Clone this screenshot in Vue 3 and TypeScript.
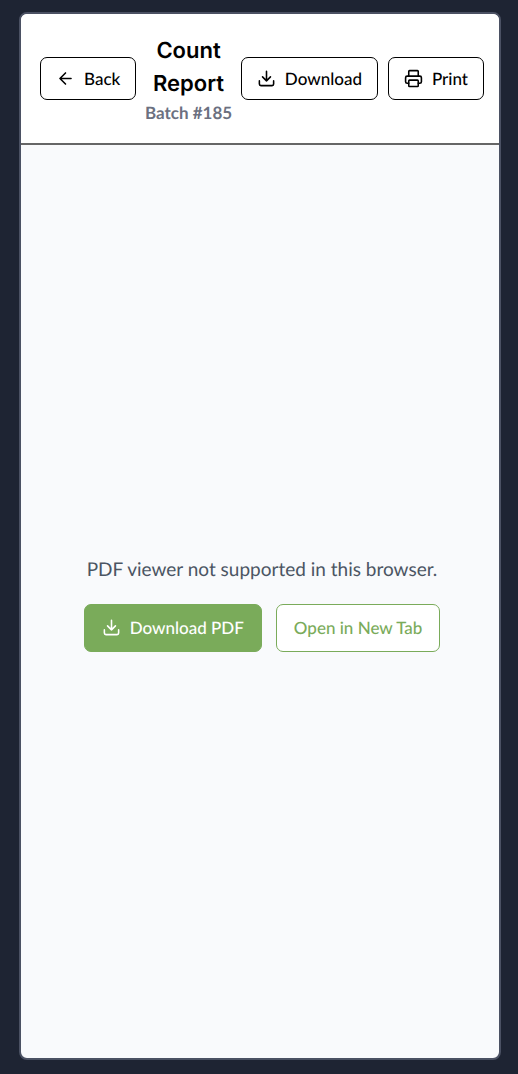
<script setup lang="ts">
const batchNumber: number = 185

function printReport(): void {
  window.print()
}
</script>

<template>
  <div class="backdrop">
    <main class="dialog">
      <header class="toolbar">
        <button type="button" class="btn">
          <svg class="icon" viewBox="0 0 24 24" aria-hidden="true">
            <path d="M19 12H5M12 19l-7-7 7-7" />
          </svg>
          Back
        </button>
        <div class="heading">
          <h1>Count Report</h1>
          <p>Batch #{{ batchNumber }}</p>
        </div>
        <button type="button" class="btn">
          <svg class="icon" viewBox="0 0 24 24" aria-hidden="true">
            <path d="M21 15v4a2 2 0 0 1-2 2H5a2 2 0 0 1-2-2v-4M7 10l5 5 5-5M12 15V3" />
          </svg>
          Download
        </button>
        <button type="button" class="btn" @click="printReport">
          <svg class="icon" viewBox="0 0 24 24" aria-hidden="true">
            <path d="M6 18H4a2 2 0 0 1-2-2v-5a2 2 0 0 1 2-2h16a2 2 0 0 1 2 2v5a2 2 0 0 1-2 2h-2" />
            <path d="M6 9V3a1 1 0 0 1 1-1h10a1 1 0 0 1 1 1v6" />
            <rect x="6" y="14" width="12" height="8" rx="1" />
          </svg>
          Print
        </button>
      </header>
      <section class="viewer">
        <p class="message">PDF viewer not supported in this browser.</p>
        <div class="actions">
          <button type="button" class="btn large primary">
            <svg class="icon" viewBox="0 0 24 24" aria-hidden="true">
              <path d="M21 15v4a2 2 0 0 1-2 2H5a2 2 0 0 1-2-2v-4M7 10l5 5 5-5M12 15V3" />
            </svg>
            Download PDF
          </button>
          <button type="button" class="btn large outline">Open in New Tab</button>
        </div>
      </section>
    </main>
  </div>
</template>

<style>
body {
  margin: 0;
  background: #1e2433;
}
</style>

<style scoped>
.backdrop {
  box-sizing: border-box;
  min-height: 100vh;
  padding: 12px 17px 14px 19px;
  display: flex;
  background: #1e2433;
  font-family: Lato, "Liberation Sans", sans-serif;
  text-rendering: geometricPrecision;
}

.dialog {
  flex: 1;
  min-width: 0;
  display: flex;
  flex-direction: column;
  border: 2px solid #4b5163;
  border-radius: 8px;
  overflow: hidden;
  background: #f9fafc;
}

.toolbar {
  display: flex;
  align-items: center;
  justify-content: space-between;
  gap: 10px;
  padding: 19px 15px 19px 19px;
  border-bottom: 2px solid #666;
  background: #fff;
}

.heading {
  flex: 1;
  min-width: 0;
  padding-top: 2px;
  text-align: center;
}

h1 {
  margin: 0;
  font: 600 22px/33px Inter, "Liberation Sans", sans-serif;
  color: #000;
}

.heading p {
  display: flex;
  justify-content: center;
  margin: 0;
  font-size: 17px;
  line-height: 23px;
  font-weight: 700;
  white-space: nowrap;
  color: #6b7080;
}

.btn {
  box-sizing: border-box;
  flex: none;
  height: 43px;
  display: inline-flex;
  align-items: center;
  justify-content: center;
  gap: 9px;
  margin: 0;
  padding: 0 15px;
  border: 1px solid #000;
  border-radius: 7px;
  background: #fff;
  color: #000;
  font: 500 17px/24px Lato, "Liberation Sans", sans-serif;
  text-rendering: inherit;
  white-space: nowrap;
}

.icon {
  width: 19px;
  height: 19px;
  fill: none;
  stroke: currentColor;
  stroke-width: 2;
  stroke-linecap: round;
  stroke-linejoin: round;
}

.viewer {
  flex: 1;
  display: flex;
  flex-direction: column;
  align-items: center;
  justify-content: center;
  gap: 19px;
  padding: 22px 19px 19px 23px;
}

.message {
  margin: 0;
  font-size: 19px;
  line-height: 30px;
  color: #4b5563;
}

.actions {
  display: flex;
  gap: 14px;
}

.large {
  height: 48px;
  padding: 0 17px;
}

.primary {
  border-color: #7aab5a;
  background: #7aab5a;
  color: #fff;
}

.outline {
  border-color: #7aab5a;
  color: #7aab5a;
}
</style>
